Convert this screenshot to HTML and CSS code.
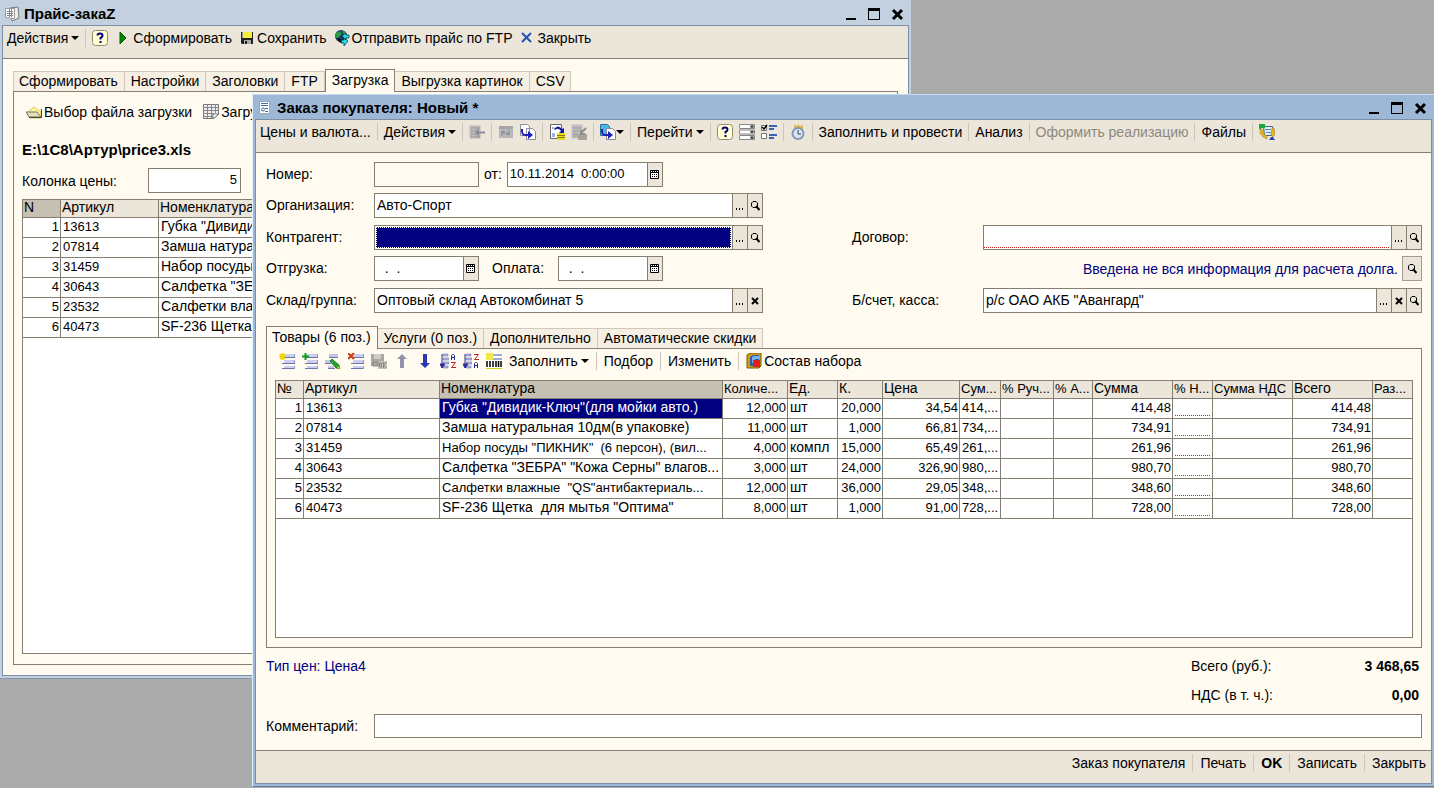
FILE: index.html
```
<!DOCTYPE html>
<html lang="ru">
<head>
<meta charset="utf-8">
<title>Заказ покупателя: Новый</title>
<link rel="stylesheet" href="styles.css">
</head>
<body>
<svg class="sprite" aria-hidden="true">
  <symbol id="i-min" viewBox="0 0 14 14"><path d="M2 11h10v2H2z"/></symbol>
  <symbol id="i-max" viewBox="0 0 14 14"><path fill-rule="evenodd" d="M1 1h12v12H1zM2 4v8h10V4z"/></symbol>
  <symbol id="i-close" viewBox="0 0 14 14"><path d="M3 3l9 9M12 3l-9 9" stroke="#000" stroke-width="3" fill="none"/></symbol>
  <symbol id="i-down" viewBox="0 0 8 4"><path d="M0 0h8L4 4z"/></symbol>
  <symbol id="i-help" viewBox="0 0 16 16"><rect x=".5" y=".5" width="15" height="15" rx="3" fill="#ffffcf" stroke="#8f8b7a"/><path d="M5.500 5.500Q5.500 3.500 8 3.500T10.500 5.700Q10.500 7 8.500 8v1.500" fill="none" stroke="#000080" stroke-width="2"/><path d="M7.500 11h2v2h-2z" fill="#000080"/></symbol>
  <symbol id="i-dots" viewBox="0 0 10 11"><path d="M1 8h1v2H1zM4 8h1v2H4zM7 8h1v2H7z"/></symbol>
  <symbol id="i-find" viewBox="0 0 10 11"><path d="M3 1.500h3L7.500 3v3L6 7.500H3L1.500 6V3z" fill="none" stroke="#000"/><path d="M6 6l3.500 4" stroke="#000" stroke-width="2"/></symbol>
  <symbol id="i-x" viewBox="0 0 10 11"><path d="M2 3l6 6M8 3L2 9" stroke="#000" stroke-width="2"/></symbol>
  <symbol id="i-cal" viewBox="0 0 10 11"><path d="M.5 1.500h8v8h-8z" fill="#fff" stroke="#000"/><path d="M1 3h7v1H1zM2 5h1v1H2zM4 5h1v1H4zM6 5h1v1H6zM2 7h1v1H2zM4 7h1v1H4zM6 7h1v1H6zM2 2h1v1H2zM4 2h1v1H4zM6 2h1v1H6z"/></symbol>
  <symbol id="i-lines" viewBox="0 0 16 16"><path d="M5 1h10v3H5zM5 7h10v3H5zM5 13h10v2H5z" fill="#cdcdf2"/><path d="M3 4.500h13M3 10.500h13M3 15.500h13" stroke="#6878a8"/><path d="M15.500 1v3M15.500 7v3M15.500 13v3" stroke="#8f9cc4"/></symbol>
  <symbol id="i-pages" viewBox="0 0 16 16"><path d="M.5.500h7l2 2v9h-9zM6.500 4.500h6l3 3v8h-9z" fill="#fff" stroke="#8c8c9c"/><path d="M3 5v3q0 2 3 2h2V7l5 4-5 4v-3H6q-5 0-5-5V5z" fill="#2020b8"/></symbol>
  <symbol id="i-sort" viewBox="0 0 9 16"><path d="M3 1h5v2H3zM3 5h6v2H3zM3 9h6v2H3zM3 13h5v2H3z" fill="#b9b9e8" stroke="#5563a0" stroke-width=".5"/><path d="M2 1v12M0 11l2 4 3-4z" stroke="#2a2a9a" fill="#2a2a9a"/></symbol>
</svg>

<main class="desktop">
<section class="window window-back" aria-label="Прайс-закаZ">
  <header class="titlebar">
    <svg class="icon" viewBox="0 0 16 16"><path d="M6 2l8-1 1 11-7 3z" fill="#eee" stroke="#777"/><path d="M1.500 2.500h9v10l-9-1z" fill="#fff" stroke="#999"/><path d="M3 5.500h6M3 7.500h6M3 9.500h6M5.500 3v8M7.500 3v8" stroke="#889"/></svg>
    <h1 class="title">Прайс-закаZ</h1>
    <button class="winbtn" aria-label="Свернуть"><svg class="glyph"><use href="#i-min"/></svg></button>
    <button class="winbtn" aria-label="Развернуть"><svg class="glyph"><use href="#i-max"/></svg></button>
    <button class="winbtn" aria-label="Закрыть окно"><svg class="glyph"><use href="#i-close"/></svg></button>
  </header>
  <div class="inner">
    <div class="toolbar">
      <button class="tool menu">Действия<svg class="arrow"><use href="#i-down"/></svg></button>
      <i class="sep"></i>
      <button class="tool" aria-label="Справка"><svg class="icon"><use href="#i-help"/></svg></button>
      <button class="tool"><svg class="icon" viewBox="0 0 16 16"><path d="M5 2l6 6-6 6z" fill="#008a00" stroke="#005c00"/></svg>Сформировать</button>
      <button class="tool"><svg class="icon" viewBox="0 0 16 16"><path d="M2 2h12v12H3l-1-1z" fill="#222"/><path d="M4 2h9v6H4z" fill="#f4ee3a"/><path d="M3 2h1v6H3z" fill="#999"/><path d="M5 10h7v4H5z" fill="#aaa"/><path d="M6 11h2v3H6z" fill="#222"/></svg>Сохранить</button>
      <button class="tool"><svg class="icon" viewBox="0 0 16 16"><circle cx="7" cy="6" r="6" fill="#17376f"/><path d="M2 3l4-2 2 3-4 4-3-1zM8 1l4 1 1 4-3-1z" fill="#2d9c45"/><path d="M8 6l4-3v2h3v3h-3v2zM14 11l-4-3v2H7v3h3v3z" fill="#29dbea" stroke="#034" stroke-width=".7"/><path d="M3 8l4 1 1 4-3-1z" fill="#111"/></svg>Отправить прайс по FTP</button>
      <button class="tool"><svg class="icon" viewBox="0 0 16 16"><path d="M3 3l9 9M12 3l-9 9" stroke="#2452b5" stroke-width="2"/></svg>Закрыть</button>
    </div>
    <div class="body">
      <div class="tabs" role="tablist">
        <button class="tab" role="tab">Сформировать</button><button class="tab" role="tab">Настройки</button><button class="tab" role="tab">Заголовки</button><button class="tab" role="tab">FTP</button><button class="tab active" role="tab" aria-selected="true">Загрузка</button><button class="tab" role="tab">Выгрузка картинок</button><button class="tab" role="tab">CSV</button>
      </div>
      <div class="panel load-panel">
        <div class="subbar">
          <button class="tool"><svg class="icon" viewBox="0 0 16 16"><path d="M3 7l5-4 7 5v6H4z" fill="#fff79a" stroke="#d8cb58"/><path d="M0 8h11l4 5H3z" fill="#e4dfb8" stroke="#77735f"/><path d="M3 13.500h12.500V5" stroke="#444" fill="none"/></svg>Выбор файла загрузки</button>
          <button class="tool"><svg class="icon" viewBox="0 0 16 16"><path d="M.5.500h15v10l-5 4H.5z" fill="#eee" stroke="#777"/><path d="M0 3.500h15M0 6.500h15M0 9.500h11M0 12.500h11M4.500 0v14M8.500 0v14M12.500 0v9" stroke="#888"/><path d="M10 15V10h6z" fill="#fff" stroke="#777"/></svg>Загрузить</button>
        </div>
        <p class="path">E:\1C8\Артур\price3.xls</p>
        <div class="price-row"><label for="col">Колонка цены:</label><span class="field short"><input id="col" class="num" value="5"></span></div>
        <div class="grid-box">
          <table class="grid">
            <colgroup><col class="w38"><col class="w98"><col></colgroup>
            <thead><tr><th class="sel-head">N</th><th>Артикул</th><th>Номенклатура</th></tr></thead>
            <tbody>
              <tr><td class="num">1</td><td class="code">13613</td><td>Губка "Дивидик-Ключ"</td></tr>
              <tr><td class="num">2</td><td class="code">07814</td><td>Замша натуральная</td></tr>
              <tr><td class="num">3</td><td class="code">31459</td><td>Набор посуды</td></tr>
              <tr><td class="num">4</td><td class="code">30643</td><td>Салфетка "ЗЕБРА"</td></tr>
              <tr><td class="num">5</td><td class="code">23532</td><td>Салфетки влажные</td></tr>
              <tr><td class="num">6</td><td class="code">40473</td><td>SF-236 Щетка</td></tr>
            </tbody>
          </table>
        </div>
      </div>
    </div>
  </div>
</section>

<section class="window window-front" aria-label="Заказ покупателя">
  <header class="titlebar">
    <svg class="icon" viewBox="0 0 16 16"><path d="M2.500 1.500h10v12h-10z" fill="#fff" stroke="#9aa"/><path d="M4 3.500h7M4 5.500h7M8 8.500h3M8 11.500h3" stroke="#3b6ea8"/><circle cx="6" cy="9.500" r="1.500" fill="none" stroke="#3b6ea8"/></svg>
    <h2 class="title">Заказ покупателя: Новый *</h2>
    <button class="winbtn" aria-label="Свернуть"><svg class="glyph"><use href="#i-min"/></svg></button>
    <button class="winbtn" aria-label="Развернуть"><svg class="glyph"><use href="#i-max"/></svg></button>
    <button class="winbtn" aria-label="Закрыть окно"><svg class="glyph"><use href="#i-close"/></svg></button>
  </header>
  <div class="inner">
    <div class="toolbar">
      <button class="tool">Цены и валюта...</button>
      <i class="sep"></i>
      <button class="tool menu">Действия<svg class="arrow"><use href="#i-down"/></svg></button>
      <i class="sep"></i>
      <button class="tool" disabled aria-label="Найти в списке"><svg class="icon" viewBox="0 0 16 16"><path d="M.5 1.500h11v13H.5z" fill="#bdbab8"/><path d="M2 4h2M5 4h6M2 7h2M5 7h3M2 10h2M5 10h3M2 13h2M5 13h6" stroke="#94918f"/><path d="M6 8.500l4-4v3h6v2h-6v3z" fill="#8c899c"/></svg></button>
      <i class="sep"></i>
      <button class="tool" disabled aria-label="Перечитать"><svg class="icon" viewBox="0 0 16 16"><path d="M1 2h14v12H1z" fill="#b9b8b9"/><path d="M1 2h14v3H1z" fill="#a3a3a8"/><path d="M4 12V8l2-1v3M3 8h4M11 6v4l-2 1V8M8 10h4" stroke="#888792" fill="none"/></svg></button>
      <button class="tool" aria-label="Скопировать"><svg class="icon"><use href="#i-pages"/></svg></button>
      <i class="sep"></i>
      <button class="tool" aria-label="Провести"><svg class="icon" viewBox="0 0 16 16"><path d="M1.500.500h11v14h-11z" fill="#fff" stroke="#666"/><path d="M3 4h2M3 10h3M3 12h3" stroke="#36b"/><path d="M5 5q4-5 8 0l2-1v5h-5l2-2q-3-4-6-1z" fill="#1414a0"/><path d="M8 9h8v7H8z" fill="#e8dc20"/><path d="M8 11.500h8M8 13.500h8" stroke="#8a7f00"/></svg></button>
      <button class="tool" disabled aria-label="Отменить проведение"><svg class="icon" viewBox="0 0 16 16"><path d="M.500.500h11v14H.5z" fill="#c0bebd"/><path d="M2 4h8M2 7h6M2 10h5M2 12h5" stroke="#999"/><path d="M7 10h9v6H7z" fill="#a7a49c"/><path d="M15 4l-5 5M10 6v4h4" stroke="#8f8c88" stroke-width="2" fill="none"/></svg></button>
      <i class="sep"></i>
      <button class="tool pair" aria-label="Ввести на основании"><svg class="icon" viewBox="0 0 16 16"><path d="M.5.500h7l2 2v9h-9z" fill="#43b9ec" stroke="#37708e"/><path d="M6.500 4.500h6l3 3v8h-9z" fill="#fff" stroke="#889"/><path d="M3 5v3q0 2 3 2h2V7l5 4-5 4v-3H6q-5 0-5-5V5z" fill="#2020b8"/></svg><svg class="arrow"><use href="#i-down"/></svg></button>
      <i class="sep"></i>
      <button class="tool menu">Перейти<svg class="arrow"><use href="#i-down"/></svg></button>
      <i class="sep"></i>
      <button class="tool" aria-label="Справка"><svg class="icon"><use href="#i-help"/></svg></button>
      <button class="tool" aria-label="Список"><svg class="icon" viewBox="0 0 16 16"><path d="M.5.500h15v4H.5zM.5 6h15v4H.5zM.5 11.500h15v4H.5z" fill="#fff" stroke="#888"/><path d="M11 1h4v3h-4zM11 6.500h4v3h-4zM11 12h4v3h-4z" fill="#999"/><path d="M12 2h2l-1 2zM12 7h2l-1 2zM12 13h2l-1 2z"/></svg></button>
      <button class="tool" aria-label="Отметки"><svg class="icon" viewBox="0 0 16 16"><path d="M.5 1.500h5v5h-5zM.5 9.500h5v5h-5z" fill="#fff" stroke="#777"/><path d="M1 3l2 2 3-4" stroke="#000" fill="none" stroke-width="1.500"/><path d="M8 2h8M8 5h5M8 11h8M8 14h5" stroke="#3b62b5" stroke-width="2"/></svg></button>
      <i class="sep"></i>
      <button class="tool" aria-label="История"><svg class="icon" viewBox="0 0 16 16"><path d="M4 1l3 1 1-2 2 2 3-1v5H4z" fill="#e7b64a"/><circle cx="8" cy="9.500" r="5.500" fill="#d9e6f4" stroke="#8398b5" stroke-width="2"/><path d="M8 6v4h3" stroke="#345" fill="none"/></svg></button>
      <i class="sep"></i>
      <button class="tool">Заполнить и провести</button>
      <i class="sep"></i>
      <button class="tool">Анализ</button>
      <i class="sep"></i>
      <button class="tool" disabled>Оформить реализацию</button>
      <i class="sep"></i>
      <button class="tool">Файлы</button>
      <i class="sep"></i>
      <button class="tool" aria-label="Контакты"><svg class="icon" viewBox="0 0 16 16"><path d="M4.500 2.500h9v9h-8z" fill="#d8f0f6" stroke="#468"/><path d="M6 5.500h6M7 8.500h5" stroke="#68a"/><path d="M0 0h6v4H2v1H0z" fill="#12a83c"/><path d="M1 5h2l2 5 3 2v3l-4-2-3-4zM13 4h2l1 6-2 3-2-2z" fill="#e3b52a" stroke="#a67a10" stroke-width=".5"/><path d="M10 16l2-3h2l2 3z" fill="#2347c4"/></svg></button>
    </div>

    <form class="body order">
      <div class="form">
        <label for="number">Номер:</label>
        <div class="line">
          <span class="field date readonly"><input id="number" readonly></span>
          <label for="date">от:</label>
          <span class="field stamp"><input id="date" class="digits" value="10.11.2014  0:00:00"><button type="button" class="fbtn" aria-label="Календарь"><svg class="fi"><use href="#i-cal"/></svg></button></span>
        </div>

        <label for="org">Организация:</label>
        <span class="field"><input id="org" value="Авто-Спорт"><button type="button" class="fbtn" aria-label="Выбрать"><svg class="fi"><use href="#i-dots"/></svg></button><button type="button" class="fbtn" aria-label="Открыть"><svg class="fi"><use href="#i-find"/></svg></button></span>

        <label for="partner">Контрагент:</label>
        <span class="field"><input id="partner" class="focused"><button type="button" class="fbtn" aria-label="Выбрать"><svg class="fi"><use href="#i-dots"/></svg></button><button type="button" class="fbtn" aria-label="Открыть"><svg class="fi"><use href="#i-find"/></svg></button></span>
        <label class="right" for="contract">Договор:</label>
        <span class="field"><input id="contract" class="required"><button type="button" class="fbtn" aria-label="Выбрать"><svg class="fi"><use href="#i-dots"/></svg></button><button type="button" class="fbtn" aria-label="Открыть"><svg class="fi"><use href="#i-find"/></svg></button></span>

        <label for="ship">Отгрузка:</label>
        <div class="line">
          <span class="field date"><input id="ship" value="  .  ."><button type="button" class="fbtn" aria-label="Календарь"><svg class="fi"><use href="#i-cal"/></svg></button></span>
          <label class="pay" for="pay">Оплата:</label>
          <span class="field date"><input id="pay" value="  .  ."><button type="button" class="fbtn" aria-label="Календарь"><svg class="fi"><use href="#i-cal"/></svg></button></span>
        </div>
        <div class="debt"><span>Введена не вся информация для расчета долга.</span><button type="button" class="debt-btn" aria-label="Расшифровка долга"><svg class="fi"><use href="#i-find"/></svg></button></div>

        <label for="store">Склад/группа:</label>
        <span class="field"><input id="store" value="Оптовый склад Автокомбинат 5"><button type="button" class="fbtn" aria-label="Выбрать"><svg class="fi"><use href="#i-dots"/></svg></button><button type="button" class="fbtn" aria-label="Очистить"><svg class="fi"><use href="#i-x"/></svg></button></span>
        <label class="right" for="account">Б/счет, касса:</label>
        <span class="field"><input id="account" value='р/с ОАО АКБ "Авангард"'><button type="button" class="fbtn" aria-label="Выбрать"><svg class="fi"><use href="#i-dots"/></svg></button><button type="button" class="fbtn" aria-label="Очистить"><svg class="fi"><use href="#i-x"/></svg></button><button type="button" class="fbtn" aria-label="Открыть"><svg class="fi"><use href="#i-find"/></svg></button></span>
      </div>

      <div class="tabs" role="tablist">
        <button type="button" class="tab active" role="tab" aria-selected="true">Товары (6 поз.)</button><button type="button" class="tab" role="tab">Услуги (0 поз.)</button><button type="button" class="tab" role="tab">Дополнительно</button><button type="button" class="tab" role="tab">Автоматические скидки</button>
      </div>
      <div class="panel goods-panel">
        <div class="subbar">
          <button type="button" class="tool" aria-label="Добавить"><svg class="icon"><use href="#i-lines"/></svg><svg class="icon over" viewBox="0 0 16 16"><path d="M3.500 0v7M0 3.500h7M1 1l5 5M6 1L1 6" stroke="#f0d000" stroke-width="1.500"/></svg></button>
          <button type="button" class="tool" aria-label="Скопировать"><svg class="icon"><use href="#i-lines"/></svg><svg class="icon over" viewBox="0 0 16 16"><path d="M3.500 0v7M0 3.500h7" stroke="#109a20" stroke-width="2"/></svg></button>
          <button type="button" class="tool" aria-label="Изменить строку"><svg class="icon" viewBox="0 0 16 16"><path d="M4 1h9v3H4zM0 7h9v3H0zM3 13h6v2H3z" fill="#c5c5ea"/><path d="M4 4.500h9M0 10.500h6M3 15.500h7" stroke="#6878a8"/><path d="M7 6l7 6 1 4-4-1-6-7z" fill="#20a530" stroke="#0b5c17" stroke-width=".7"/><path d="M12 15l3 1-1-3z" fill="#e8d020"/></svg></button>
          <button type="button" class="tool" aria-label="Удалить"><svg class="icon"><use href="#i-lines"/></svg><svg class="icon over" viewBox="0 0 16 16"><path d="M0 0l6 6M6 0L0 6" stroke="#d23a14" stroke-width="2"/></svg></button>
          <button type="button" class="tool" disabled aria-label="Закончить редактирование"><svg class="icon" viewBox="0 0 16 16"><path d="M0 1h13v12H0z" fill="#aaa8a3"/><path d="M3 1h7v5H3z" fill="#cfccc6"/><path d="M7 8h9v8H7z" fill="#c5c2bc"/><path d="M8.500 10h2v4h-2zM12.500 9v6M15.500 9l-3 3 3 3M2 9h5v4H2z" fill="none" stroke="#87847f"/></svg></button>
          <button type="button" class="tool" aria-label="Вверх"><svg class="icon" viewBox="0 0 16 16"><path d="M8 1l5 5h-3v9H6V6H3z" fill="#9393ac"/></svg></button>
          <button type="button" class="tool" aria-label="Вниз"><svg class="icon" viewBox="0 0 16 16"><path d="M8 15l5-5h-3V1H6v9H3z" fill="#2b35ae"/></svg></button>
          <button type="button" class="tool" aria-label="По возрастанию"><svg class="icon" viewBox="0 0 16 16"><use href="#i-sort" width="9" height="16"/><path d="M11.500 7V2.500l1-1h1l1 1V7M11 4.500h4" stroke="#1c2b92" fill="none"/><path d="M11 9.500h4.500L11.500 14.500H16" stroke="#b3242a" fill="none"/></svg></button>
          <button type="button" class="tool" aria-label="По убыванию"><svg class="icon" viewBox="0 0 16 16"><use href="#i-sort" width="9" height="16"/><path d="M11 1.500h4.500L11.500 6.500H16" stroke="#b3242a" fill="none"/><path d="M11.500 15v-4.500l1-1h1l1 1V15M11 12.500h4" stroke="#1c2b92" fill="none"/></svg></button>
          <button type="button" class="tool" aria-label="Штрихкод"><svg class="icon" viewBox="0 0 16 16"><path d="M0 0h7v7H0z" fill="#f1e94c"/><path d="M7 1h9v2H7zM7 5h9v2H7z" fill="#9eabd8"/><path d="M0 8h16v8H0z" fill="#fff"/><path d="M1 8v6M4 8v6M7 8v6M10 8v6M12.500 8v6M15 8v6" stroke="#000" stroke-width="1.500"/><path d="M0 15.500h16" stroke="#d8d020"/></svg></button>
          <button type="button" class="tool menu">Заполнить<svg class="arrow"><use href="#i-down"/></svg></button>
          <i class="sep"></i>
          <button type="button" class="tool">Подбор</button>
          <i class="sep"></i>
          <button type="button" class="tool">Изменить</button>
          <i class="sep"></i>
          <button type="button" class="tool"><svg class="icon" viewBox="0 0 16 16"><path d="M1 2l3-2h11v13l-2 2H1z" fill="#d39c12" stroke="#7c5800"/><path d="M4 4l3-2h6v6H8v5H4z" fill="#2b5ea8"/><path d="M6 4l2-1h5v3H9v4H6z" fill="#74b5e6"/><path d="M7 7h7v7H7z" fill="#e02020"/></svg>Состав набора</button>
        </div>
        <div class="grid-box">
          <table class="grid">
            <colgroup><col class="w28"><col class="w136"><col><col class="w65"><col class="w50"><col class="w45"><col class="w77"><col class="w41"><col class="w53"><col class="w39"><col class="w80"><col class="w40"><col class="w80"><col class="w80"><col class="w39"></colgroup>
            <thead><tr><th>№</th><th>Артикул</th><th class="sel-head">Номенклатура</th><th class="narrow">Количе...</th><th>Ед.</th><th>К.</th><th>Цена</th><th class="narrow">Сум...</th><th class="narrow">% Руч...</th><th class="narrow">% А...</th><th>Сумма</th><th class="narrow">% Н...</th><th class="narrow">Сумма НДС</th><th>Всего</th><th class="narrow">Раз...</th></tr></thead>
            <tbody>
              <tr><td class="num">1</td><td class="code">13613</td><td class="selected">Губка "Дивидик-Ключ"(для мойки авто.)</td><td class="num">12,000</td><td>шт</td><td class="num">20,000</td><td class="num">34,54</td><td class="code">414,...</td><td></td><td></td><td class="num">414,48</td><td class="need"></td><td></td><td class="num">414,48</td><td></td></tr>
              <tr><td class="num">2</td><td class="code">07814</td><td>Замша натуральная 10дм(в упаковке)</td><td class="num">11,000</td><td>шт</td><td class="num">1,000</td><td class="num">66,81</td><td class="code">734,...</td><td></td><td></td><td class="num">734,91</td><td class="need"></td><td></td><td class="num">734,91</td><td></td></tr>
              <tr><td class="num">3</td><td class="code">31459</td><td class="narrow">Набор посуды "ПИКНИК"  (6 персон), (вил...</td><td class="num">4,000</td><td>компл</td><td class="num">15,000</td><td class="num">65,49</td><td class="code">261,...</td><td></td><td></td><td class="num">261,96</td><td class="need"></td><td></td><td class="num">261,96</td><td></td></tr>
              <tr><td class="num">4</td><td class="code">30643</td><td>Салфетка "ЗЕБРА" "Кожа Серны" влагов...</td><td class="num">3,000</td><td>шт</td><td class="num">24,000</td><td class="num">326,90</td><td class="code">980,...</td><td></td><td></td><td class="num">980,70</td><td class="need"></td><td></td><td class="num">980,70</td><td></td></tr>
              <tr><td class="num">5</td><td class="code">23532</td><td class="narrow">Салфетки влажные  "QS"антибактериаль...</td><td class="num">12,000</td><td>шт</td><td class="num">36,000</td><td class="num">29,05</td><td class="code">348,...</td><td></td><td></td><td class="num">348,60</td><td class="need"></td><td></td><td class="num">348,60</td><td></td></tr>
              <tr><td class="num">6</td><td class="code">40473</td><td>SF-236 Щетка  для мытья "Оптима"</td><td class="num">8,000</td><td>шт</td><td class="num">1,000</td><td class="num">91,00</td><td class="code">728,...</td><td></td><td></td><td class="num">728,00</td><td class="need"></td><td></td><td class="num">728,00</td><td></td></tr>
            </tbody>
          </table>
        </div>
      </div>

      <div class="summary">
        <span class="price-type">Тип цен: Цена4</span>
        <dl class="totals">
          <dt>Всего (руб.):</dt><dd>3 468,65</dd>
          <dt>НДС (в т. ч.):</dt><dd>0,00</dd>
        </dl>
      </div>
      <div class="comment"><label for="comment">Комментарий:</label><span class="field"><input id="comment"></span></div>
    </form>
    <footer class="footer">
      <button class="tool">Заказ покупателя</button><i class="sep"></i><button class="tool">Печать</button><i class="sep"></i><button class="tool strong">OK</button><i class="sep"></i><button class="tool">Записать</button><i class="sep"></i><button class="tool">Закрыть</button>
    </footer>
  </div>
</section>
</main>
</body>
</html>
```
FILE: styles.css
```
* { box-sizing: border-box; }

html, body { height: 100%; margin: 0; }

body {
  font: 14px/18px "Liberation Sans", Arial, sans-serif;
  color: #000;
}

button, input { font: inherit; color: inherit; margin: 0; padding: 0; border: 0; background: none; }
h1, h2, p, dl, dd { margin: 0; }
.sprite { display: none; }

.desktop { position: relative; height: 100%; overflow: hidden; background: #ababab; }

/* windows */
.window { position: absolute; display: flex; flex-direction: column; }
.window-back { left: 0; top: 0; right: 523px; bottom: 109px; padding: 1px 2px 2px; background: #c2d0df; border-bottom: 1px solid #8796a8; }
.window-front { left: 252px; top: 94px; right: 0; bottom: 1px; padding: 1px 2px 2px; background: #9db7d6; border-left: 1px solid #e2f0fa; border-top: 1px solid #c9dcef; border-bottom: 1px solid #5f7d9c; }

.titlebar { display: flex; align-items: center; height: 24px; padding: 2px 5px 0 2px; }
.title { flex: 1; margin-left: 4px; font-size: 15px; line-height: 18px; }
.winbtn { display: flex; margin-left: 9px; }
.glyph { width: 14px; height: 14px; display: block; }

.inner { flex: 1; min-height: 0; display: flex; flex-direction: column; border: 1px solid #7b8ea3; background: #fffbf0; }
.window-front .titlebar { height: 23px; padding-top: 0; padding-left: 2px; }

/* toolbars */
.toolbar { display: flex; gap: 6px; height: 33px; padding: 0 4px 9px; background: #ebe5da; border-bottom: 1px solid #857f72; }
.window-back .toolbar .tool + .tool { margin-left: 1px; }
.tool { position: relative; display: flex; align-items: center; gap: 2px; white-space: nowrap; }
.tool:disabled { color: #8d897f; }
.menu { gap: 3px; }
.pair { gap: 0; }
.strong { font-weight: bold; }
.icon { width: 16px; height: 16px; flex: none; }
.over { position: absolute; left: 0; top: 4px; }
.arrow { width: 8px; height: 4px; flex: none; }
.sep { width: 1px; height: 18px; align-self: center; background: #cdc7ba; }

.body { flex: 1; min-height: 0; display: flex; flex-direction: column; padding: 10px; }
.order { padding: 9px 9px 12px 10px; }

/* tabs */
.tabs { display: flex; align-items: flex-end; }
.tab { height: 20px; padding: 0 6px 1px; background: #f6f0e4; border: 1px solid #cfc9bb; border-bottom: 0; border-left-width: 0; white-space: nowrap; }
.tab:first-child { border-left-width: 1px; padding-left: 5px; }
.tab.active { height: 23px; margin-bottom: -1px; padding-bottom: 2px; background: #fffbf0; border: 1px solid #857f72; border-bottom: 0; z-index: 1; }

.panel { flex: 1; min-height: 0; display: flex; flex-direction: column; border: 1px solid #857f72; }
.load-panel { padding: 8px 8px 10px; }
.goods-panel { padding: 0 8px 9px; }
.subbar { display: flex; gap: 7px; padding-left: 4px; }
.load-panel .subbar { gap: 11px; height: 24px; }
.goods-panel .subbar { height: 24px; margin-bottom: 7px; }

.path { margin: 17px 0 9px; font-size: 15px; font-weight: bold; }
.price-row { display: flex; align-items: center; margin-bottom: 6px; }
.price-row label { width: 126px; }
.short { width: 93px; }

/* fields */
.field { display: flex; height: 25px; min-width: 0; background: #fff; border: 1px solid #857f72; }
.field input { flex: 1; width: 0; min-width: 0; padding: 0 2px 2px; outline: 0; white-space: pre; }
.field .digits { font-size: 13px; }
.field .num { font-size: 13px; text-align: right; padding-right: 3px; }
.readonly { background: #fffbf0; }
.field .focused { margin: 1px; background: #000080; border: 1px dotted #fff; }
.field .required { background: repeating-linear-gradient(90deg, #d02020 0 1px, #fff 1px 2px) 0 21px / 100% 1px no-repeat; margin-right: 2px; }
.fbtn { display: flex; align-items: center; justify-content: center; width: 15px; flex: none; background: #ebe5da; border-left: 1px solid #857f72; }
.fi { width: 10px; height: 11px; display: block; }
.date { width: 105px; }
.stamp { width: 156px; }

.form {
  display: grid;
  grid-template-columns: 108px 389px 89px 131px 1fr;
  grid-template-rows: 25px 26px 25px 26px 25px;
  row-gap: 6px;
  align-items: start;
  margin-bottom: 13px;
}
.form label { line-height: 25px; }
.form > label { grid-column: 1; }
.form > label.right { grid-column: 4; }
.line { display: flex; gap: 5px; }
.line .pay { width: 69px; padding-left: 8px; }
.debt { grid-column: 4 / 6; display: flex; justify-content: flex-end; align-items: center; gap: 4px; color: #000080; white-space: nowrap; }
.debt-btn { display: flex; align-items: center; justify-content: center; width: 20px; height: 25px; background: #ebe5da; border: 1px solid #a39d8f; }

/* tables */
.grid-box { flex: 1; min-height: 0; overflow: hidden; background: #fff; border: 1px solid #857f72; }
.grid { width: 100%; table-layout: fixed; border-collapse: separate; border-spacing: 0; }
.grid th, .grid td { height: 20px; padding: 0 1px 2px; overflow: hidden; white-space: pre; text-align: left; vertical-align: top; font-weight: normal; line-height: 17px; border-right: 1px solid #857f72; border-bottom: 1px solid #857f72; }
.grid th { height: 18px; line-height: 15px; background: #ebe5da; }
.grid td { padding-left: 2px; }
.grid th:last-child, .grid td:last-child { border-right: 0; }
.grid .sel-head { background: #c6c0b3; }
.grid .num { font-size: 13px; text-align: right; }
.grid .code, .grid .narrow { font-size: 13px; }
.grid .selected { background: #000080; color: #fff; }
.need::after { content: ""; display: block; height: 17px; background: repeating-linear-gradient(90deg, #d02020 0 1px, #fff 1px 2px) 0 100% / 100% 1px no-repeat; }
.w28 { width: 28px; } .w38 { width: 38px; } .w39 { width: 39px; } .w40 { width: 40px; }
.w41 { width: 41px; } .w45 { width: 45px; } .w50 { width: 50px; } .w53 { width: 53px; }
.w65 { width: 65px; } .w77 { width: 77px; } .w80 { width: 80px; } .w98 { width: 98px; }
.w136 { width: 136px; }

/* totals, comment, footer */
.summary { display: flex; justify-content: space-between; padding: 9px 3px 10px 0; }
.price-type { color: #000080; }
.totals { display: grid; grid-template-columns: 128px 100px; row-gap: 11px; }
.totals dd { font-weight: bold; text-align: right; }
.comment { display: flex; align-items: center; }
.comment label { width: 108px; }
.comment .field { flex: 1; height: 24px; }
.footer { display: flex; justify-content: flex-end; gap: 7px; height: 33px; padding: 0 5px 8px; background: #ebe5da; border-top: 1px solid #857f72; }
```
